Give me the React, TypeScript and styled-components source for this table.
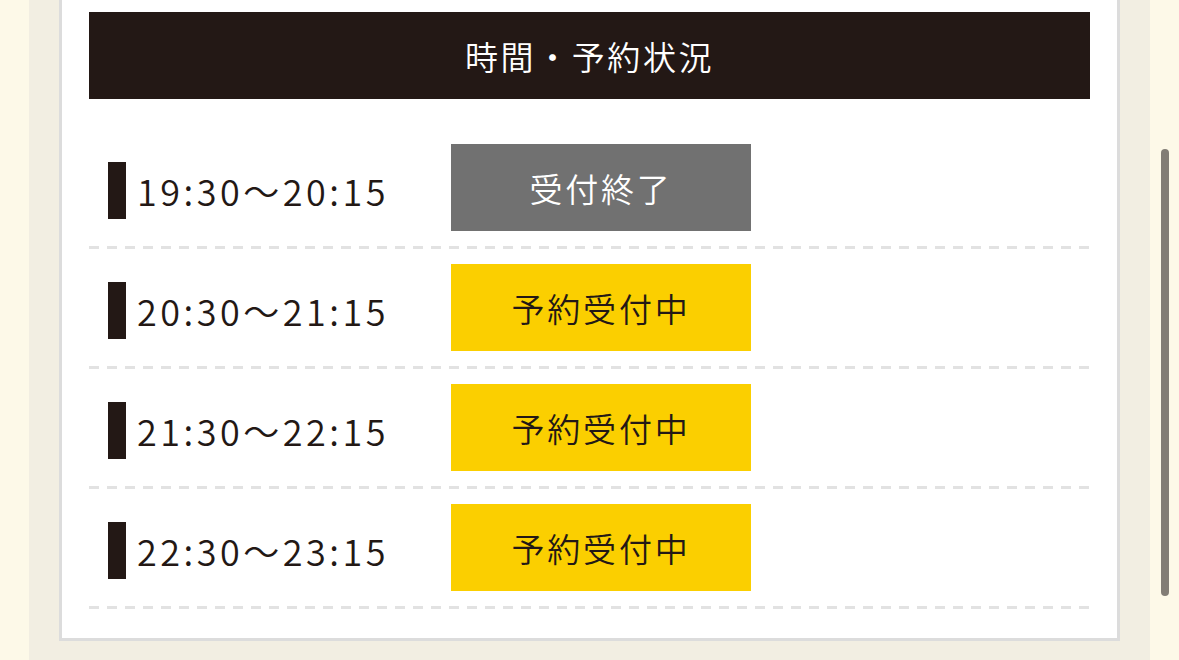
import React from "react";
import styled, { createGlobalStyle } from "styled-components";

const GlobalStyle = createGlobalStyle`
  html, body {
    margin: 0;
    padding: 0;
    background: #fdf9e8;
    font-family: "Noto Sans CJK JP", "Noto Sans", sans-serif;
    overflow: hidden;
  }
`;

const Page = styled.div`
  position: relative;
  height: 660px;
  padding: 0 29px;
  box-sizing: border-box;
`;

const Frame = styled.div`
  background: #f2eee2;
  padding: 0 30px 19px;
  height: 100%;
  box-sizing: border-box;
`;

const Card = styled.section`
  background: #fff;
  border: 3px solid #dcdcdc;
  border-top: none;
  padding: 12px 27px 29px;
`;

const Header = styled.h2`
  margin: 0;
  height: 87px;
  background: #231815;
  color: #fff;
  font-weight: 350;
  font-size: 33px;
  letter-spacing: 2.6px;
  display: flex;
  align-items: center;
  justify-content: center;
`;

const List = styled.ul`
  list-style: none;
  margin: 30px 0 0;
  padding: 0;
`;

const Row = styled.li`
  position: relative;
  display: flex;
  align-items: center;
  padding: 15px 0 18px 19px;
  &::after {
    content: "";
    position: absolute;
    left: 0;
    right: 0;
    bottom: 0;
    height: 3px;
    background: repeating-linear-gradient(90deg, #e2e2e2 0 10px, transparent 10px 18px);
  }
`;

const TimeLabel = styled.div`
  width: 343px;
  display: flex;
  align-items: center;
  gap: 11px;
  color: #231815;
  font-size: 36px;
  font-weight: 350;
  letter-spacing: 3.5px;
  padding-top: 5px;
  &::before {
    content: "";
    width: 18px;
    height: 57px;
    background: #231815;
  }
`;

const StatusButton = styled.div<{ $closed?: boolean }>`
  width: 300px;
  height: 87px;
  display: flex;
  align-items: center;
  justify-content: center;
  background: ${(p) => (p.$closed ? "#717171" : "#fbcf00")};
  color: ${(p) => (p.$closed ? "#fff" : "#231815")};
  font-size: 33px;
  font-weight: 350;
  letter-spacing: 2.8px;
`;

const ScrollThumb = styled.div`
  position: absolute;
  right: 10px;
  top: 149px;
  width: 8px;
  height: 447px;
  border-radius: 4px;
  background: #827d75;
`;

const slots = [
  { time: "19:30〜20:15", closed: true },
  { time: "20:30〜21:15", closed: false },
  { time: "21:30〜22:15", closed: false },
  { time: "22:30〜23:15", closed: false },
];

export default function App() {
  return (
    <>
      <GlobalStyle />
      <Page>
        <Frame>
          <Card>
            <Header>時間・予約状況</Header>
            <List>
              {slots.map((s) => (
                <Row key={s.time}>
                  <TimeLabel>{s.time}</TimeLabel>
                  <StatusButton $closed={s.closed}>
                    {s.closed ? "受付終了" : "予約受付中"}
                  </StatusButton>
                </Row>
              ))}
            </List>
          </Card>
        </Frame>
        <ScrollThumb />
      </Page>
    </>
  );
}
